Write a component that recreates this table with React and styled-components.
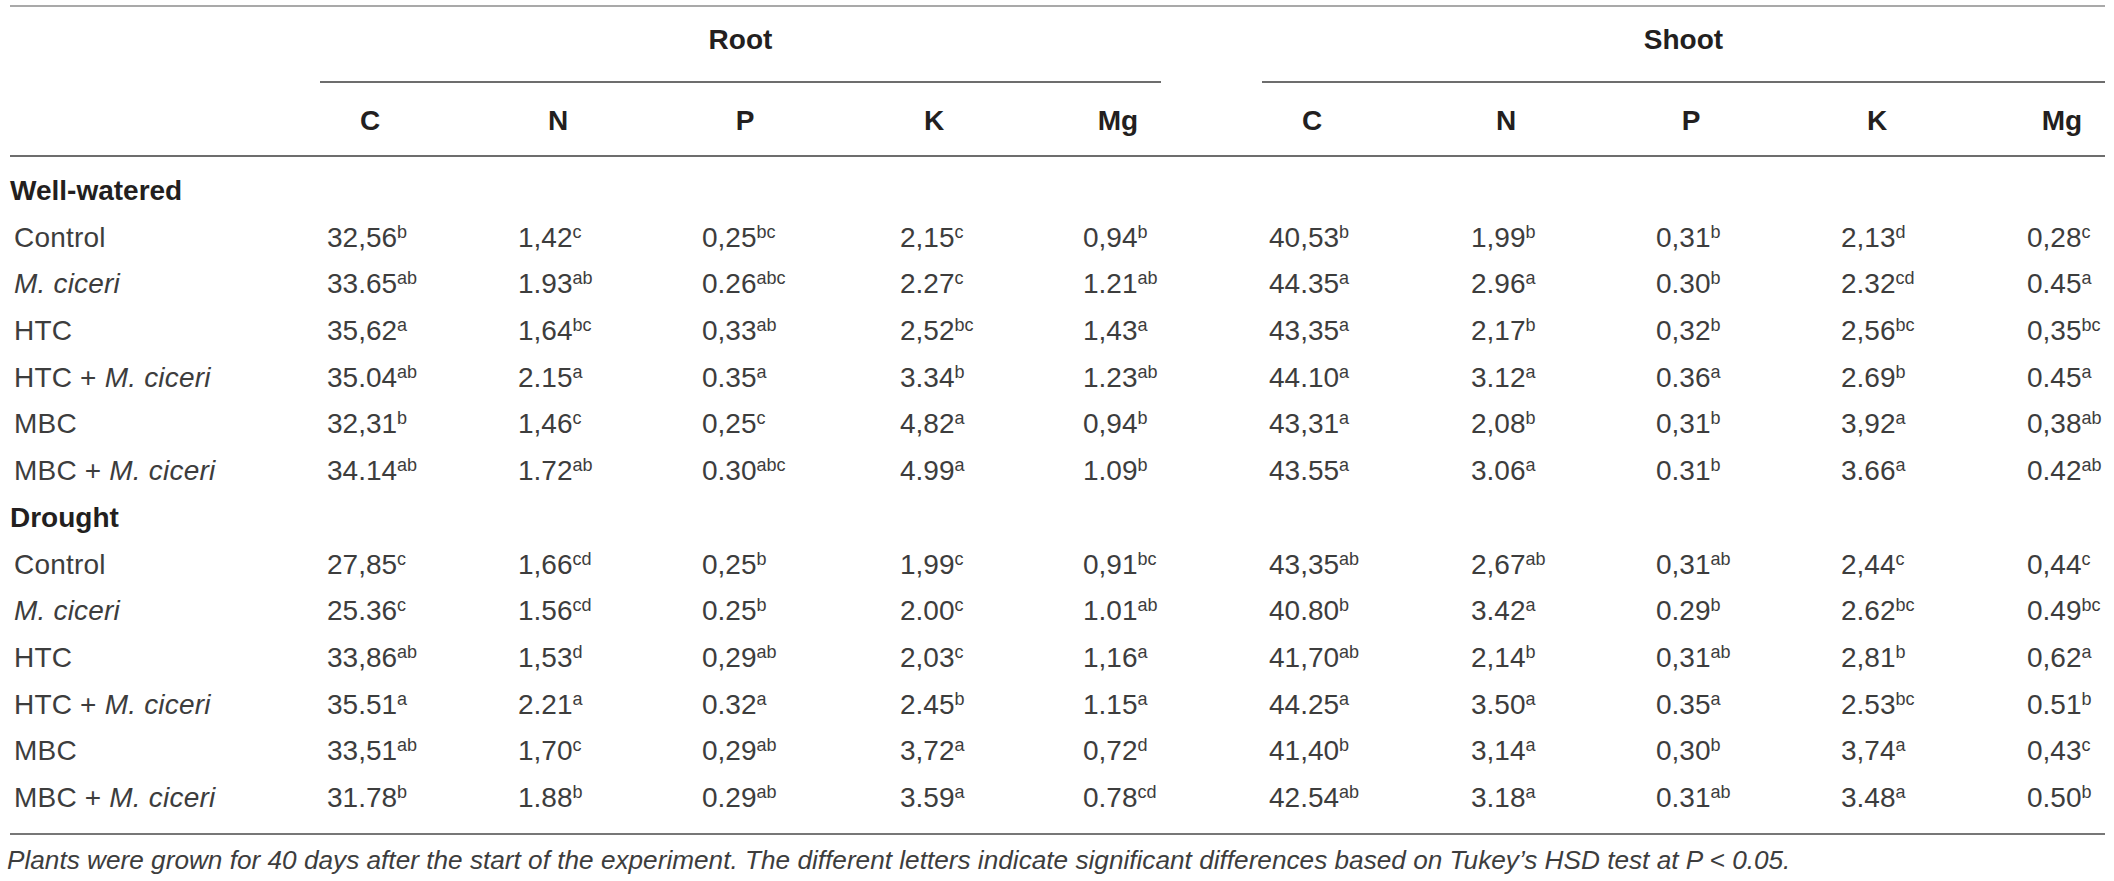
import React from "react";
import styled, { createGlobalStyle } from "styled-components";

const Global = createGlobalStyle`
  html, body { margin: 0; padding: 0; background: #ffffff; }
  body { font-family: "Liberation Sans", Arial, sans-serif; }
`;

const COLS = "317px 191px 184px 198px 183px 186px 202px 185px 185px 186px 78px";
const HEAD_W = [86, 80, 86, 68, 70, 86, 70, 70, 72, 70];

const Page = styled.div`
  padding: 5px 0 0 10px;
  width: 2095px;
`;

const Table = styled.div`
  width: 2095px;
  border-top: 2px solid #a9a9a9;
`;

const Row = styled.div`
  display: grid;
  grid-template-columns: ${COLS};
`;

const GroupRow = styled(Row)`
  height: 76px;
`;

const GroupCell = styled.div`
  grid-column: ${(p) => p.$span};
  margin-left: -7px;
  margin-right: ${(p) => p.$mr}px;
  height: 76px;
  box-sizing: border-box;
  padding-top: 17px;
  border-bottom: 2px solid #6d6d6d;
  text-align: center;
  font-family: "Liberation Sans", Arial, sans-serif;
  font-weight: 700;
  font-size: 28px;
  line-height: 32px;
  color: #231f20;
`;

const HeaderRow = styled(Row)`
  height: 74px;
  box-sizing: border-box;
  border-bottom: 2px solid #6d6d6d;
`;

const HeadCell = styled.div`
  width: ${(p) => p.$w}px;
  padding-top: 22px;
  text-align: center;
  font-family: "Liberation Sans", Arial, sans-serif;
  font-weight: 700;
  font-size: 28px;
  line-height: 32px;
  color: #231f20;
`;

const Body = styled.div`
  padding: 11px 0 11px;
  border-bottom: 2px solid #777777;
`;

const DataRow = styled(Row)`
  height: 46.7px;
  align-items: center;
`;

const SectionLabel = styled.div`
  grid-column: 1 / -1;
  font-family: "Liberation Sans", Arial, sans-serif;
  font-weight: 700;
  font-size: 28px;
  line-height: 46.7px;
  color: #231f20;
`;

const Label = styled.div`
  padding-left: 4px;
  font-family: "Liberation Sans", Arial, sans-serif;
  font-weight: 400;
  font-size: 28px;
  letter-spacing: 0.2px;
  line-height: 46.7px;
  color: #3d3d3d;
  white-space: nowrap;
`;

const Value = styled.div`
  font-family: "Liberation Sans", Arial, sans-serif;
  font-weight: 400;
  font-size: 28px;
  line-height: 46.7px;
  color: #3d3d3d;
  white-space: nowrap;
`;

const Sup = styled.span`
  font-size: 18px;
  vertical-align: 9px;
  line-height: 0;
`;

const Em = styled.i`
  font-style: italic;
`;

const Footnote = styled.p`
  margin: 0;
  padding: 9px 0 0 0;
  margin-left: -3px;
  font-family: "Liberation Sans", Arial, sans-serif;
  font-weight: 400;
  font-style: italic;
  font-size: 26.2px;
  line-height: 32px;
  color: #3d3d3d;
  white-space: nowrap;
`;

const rawSections = [
  {
    title: "Well-watered",
    rows: [
      ["Control", "32,56^b 1,42^c 0,25^bc 2,15^c 0,94^b 40,53^b 1,99^b 0,31^b 2,13^d 0,28^c"],
      ["*M. ciceri", "33.65^ab 1.93^ab 0.26^abc 2.27^c 1.21^ab 44.35^a 2.96^a 0.30^b 2.32^cd 0.45^a"],
      ["HTC", "35,62^a 1,64^bc 0,33^ab 2,52^bc 1,43^a 43,35^a 2,17^b 0,32^b 2,56^bc 0,35^bc"],
      ["HTC + *M. ciceri", "35.04^ab 2.15^a 0.35^a 3.34^b 1.23^ab 44.10^a 3.12^a 0.36^a 2.69^b 0.45^a"],
      ["MBC", "32,31^b 1,46^c 0,25^c 4,82^a 0,94^b 43,31^a 2,08^b 0,31^b 3,92^a 0,38^ab"],
      ["MBC + *M. ciceri", "34.14^ab 1.72^ab 0.30^abc 4.99^a 1.09^b 43.55^a 3.06^a 0.31^b 3.66^a 0.42^ab"],
    ],
  },
  {
    title: "Drought",
    rows: [
      ["Control", "27,85^c 1,66^cd 0,25^b 1,99^c 0,91^bc 43,35^ab 2,67^ab 0,31^ab 2,44^c 0,44^c"],
      ["*M. ciceri", "25.36^c 1.56^cd 0.25^b 2.00^c 1.01^ab 40.80^b 3.42^a 0.29^b 2.62^bc 0.49^bc"],
      ["HTC", "33,86^ab 1,53^d 0,29^ab 2,03^c 1,16^a 41,70^ab 2,14^b 0,31^ab 2,81^b 0,62^a"],
      ["HTC + *M. ciceri", "35.51^a 2.21^a 0.32^a 2.45^b 1.15^a 44.25^a 3.50^a 0.35^a 2.53^bc 0.51^b"],
      ["MBC", "33,51^ab 1,70^c 0,29^ab 3,72^a 0,72^d 41,40^b 3,14^a 0,30^b 3,74^a 0,43^c"],
      ["MBC + *M. ciceri", "31.78^b 1.88^b 0.29^ab 3.59^a 0.78^cd 42.54^ab 3.18^a 0.31^ab 3.48^a 0.50^b"],
    ],
  },
];

const heads = ["C", "N", "P", "K", "Mg", "C", "N", "P", "K", "Mg"];

function RowLabel({ text }) {
  const i = text.indexOf("*");
  if (i < 0) return <Label>{text}</Label>;
  return (
    <Label>
      {text.slice(0, i)}
      <Em>{text.slice(i + 1)}</Em>
    </Label>
  );
}

function Cell({ v }) {
  const [num, sup] = v.split("^");
  return (
    <Value>
      {num}
      <Sup>{sup}</Sup>
    </Value>
  );
}

export default function App() {
  return (
    <>
      <Global />
      <Page>
        <Table>
          <GroupRow>
            <GroupCell $span="2 / 7" $mr={108}>Root</GroupCell>
            <GroupCell $span="7 / 12" $mr={0}>Shoot</GroupCell>
          </GroupRow>
          <HeaderRow>
            <div />
            {heads.map((h, i) => (
              <HeadCell key={i} $w={HEAD_W[i]}>{h}</HeadCell>
            ))}
          </HeaderRow>
          <Body>
            {rawSections.map((s) => (
              <React.Fragment key={s.title}>
                <DataRow>
                  <SectionLabel>{s.title}</SectionLabel>
                </DataRow>
                {s.rows.map(([label, vals], ri) => (
                  <DataRow key={ri}>
                    <RowLabel text={label} />
                    {vals.split(" ").map((v, ci) => (
                      <Cell key={ci} v={v} />
                    ))}
                  </DataRow>
                ))}
              </React.Fragment>
            ))}
          </Body>
        </Table>
        <Footnote>
          Plants were grown for 40 days after the start of the experiment. The different letters indicate
          significant differences based on Tukey’s HSD test at P &lt; 0.05.
        </Footnote>
      </Page>
    </>
  );
}
